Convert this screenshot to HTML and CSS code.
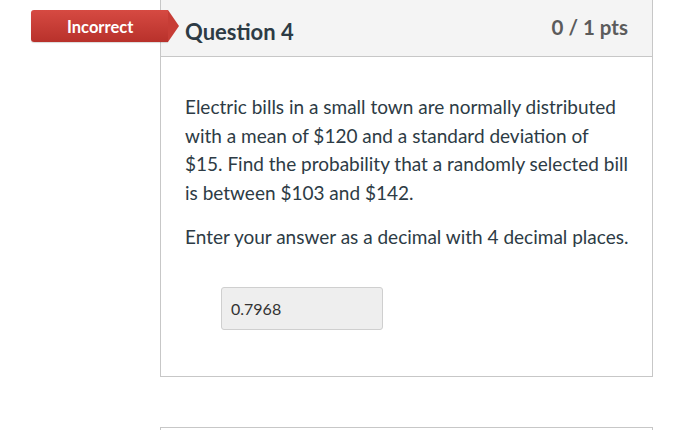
FILE: index.html
```html
<!DOCTYPE html>
<html>
<head>
<meta charset="utf-8">
<link rel="stylesheet" href="styles.css">
</head>
<body>
<div class="page">
  <div class="card">
    <div class="badge">Incorrect</div>
    <div class="card-header">
      <h2 class="q-title">Question 4</h2>
      <div class="q-points">0 / 1 pts</div>
    </div>
    <div class="card-body">
      <p class="q-text">Electric bills in a small town are normally distributed with a mean of $120 and a standard deviation of $15. Find the probability that a randomly selected bill is between $103 and $142.</p>
      <p class="q-text">Enter your answer as a decimal with 4 decimal places.</p>
      <div class="answer">0.7968</div>
    </div>
  </div>
  <div class="card next"></div>
</div>
</body>
</html>
```
FILE: styles.css
```css
html, body {
  margin: 0;
  padding: 0;
  background: #fff;
}
body {
  font-family: Lato, "Noto Sans", sans-serif;
  color: #2d3b45;
  width: 700px;
  height: 430px;
  overflow: hidden;
}
.page {
  display: flex;
  flex-direction: column;
  gap: 50px;
  padding-left: 160px;
}
.card {
  position: relative;
  width: 491px;
  border: 1px solid #c7c7c7;
  border-top: none;
  background: #fff;
}
.card.next {
  border-top: 1px solid #c7c7c7;
  border-bottom: none;
  height: 2px;
}
.badge {
  position: absolute;
  left: -130px;
  top: 10px;
  width: 137px;
  height: 32px;
  box-sizing: border-box;
  border-radius: 3px 0 0 3px;
  background: linear-gradient(#d64a42, #b8312b);
  color: #fff;
  font-weight: 700;
  font-size: 16.5px;
  line-height: 30px;
  padding: 2px 0 0 36px;
  box-shadow: 0 1px 1px rgba(0,0,0,0.15);
}
.badge::after {
  content: "";
  position: absolute;
  right: -11px;
  top: 0;
  border-top: 16px solid transparent;
  border-bottom: 16px solid transparent;
  border-left: 11px solid #c73d36;
}
.card-header {
  height: 57px;
  box-sizing: border-box;
  background: #f4f4f4;
  border-bottom: 1px solid #c7c7c7;
  display: flex;
  justify-content: space-between;
  align-items: flex-start;
  padding: 0 24px;
}
.q-title {
  margin: 0;
  padding-top: 19px;
  font-size: 22px;
  font-weight: 700;
  line-height: 26px;
  color: #2d3b45;
}
.q-points {
  padding-top: 14px;
  font-size: 20.5px;
  font-weight: 700;
  line-height: 26px;
  color: #5b5b5b;
}
.card-body {
  padding: 36px 24px 46px 24px;
}
.q-text {
  margin: 0 0 15px 0;
  font-size: 19px;
  line-height: 28.7px;
  width: 444px;
}
.answer {
  margin: 35px 0 0 36px;
  width: 162px;
  height: 43px;
  box-sizing: border-box;
  background: #eeeeee;
  border: 1px solid #cfcfcf;
  border-radius: 3px;
  padding-left: 9px;
  font-size: 16px;
  line-height: 41px;
  color: #333;
}
```
